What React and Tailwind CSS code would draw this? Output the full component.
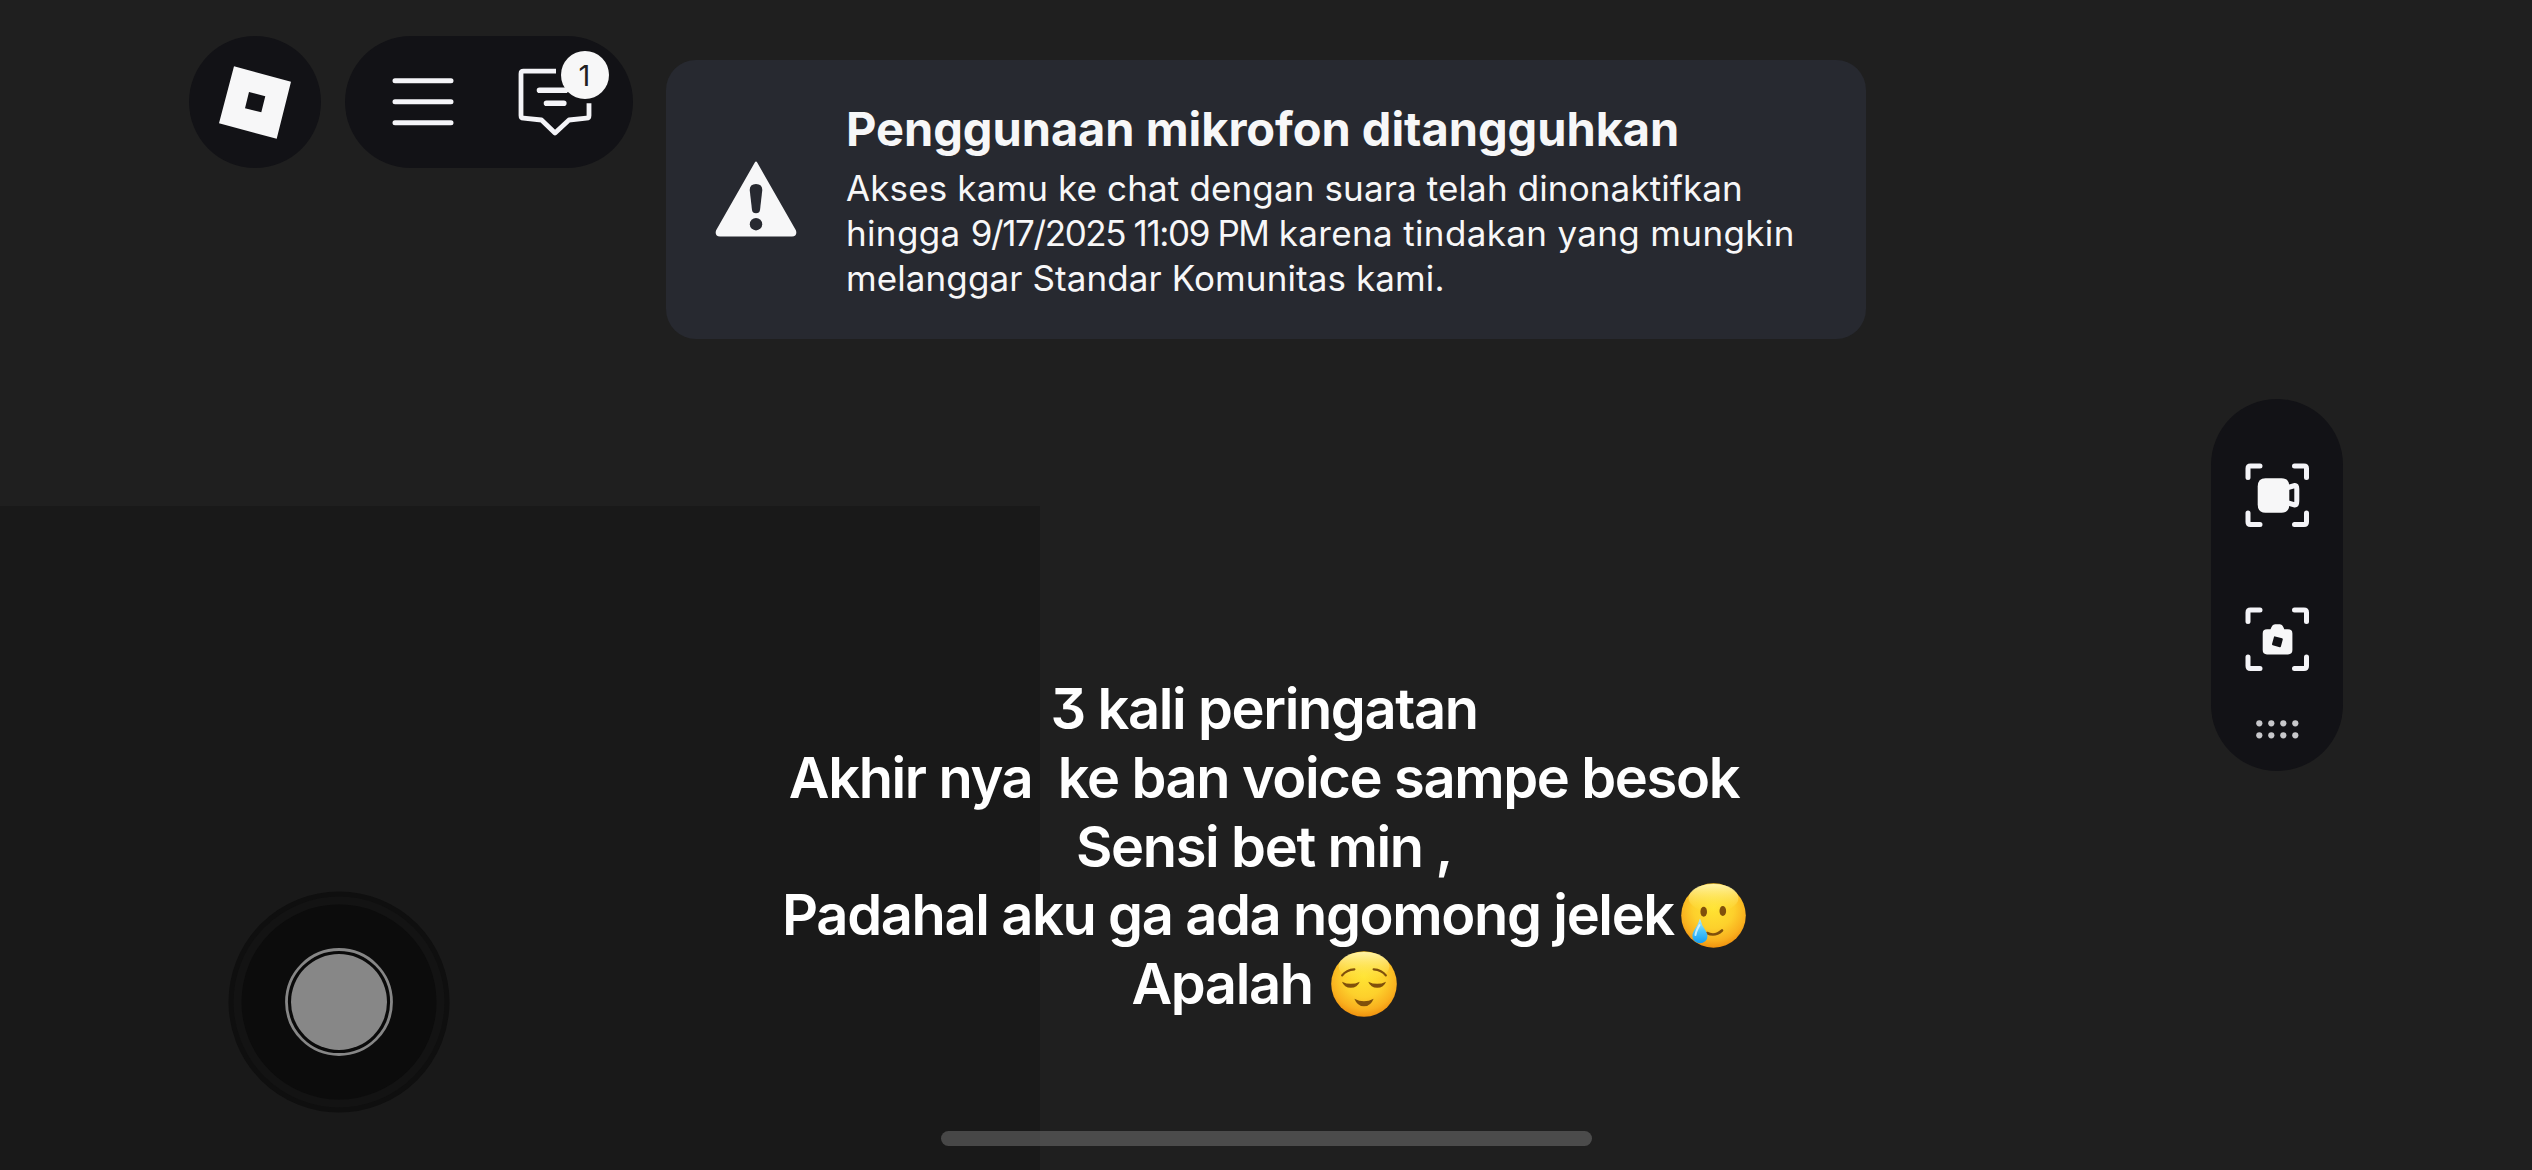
function RobloxButton() {
  return (
    <button className="size-[132px] shrink-0 rounded-full bg-[#121216]">
      <svg viewBox="0 0 132 132" className="size-full">
        <path
          fill="#f7f7f8"
          fillRule="evenodd"
          d="M45 30.3 102 45.7 87.7 102.7 30 87.3ZM60 56 56 72.3 72.3 76.3 76.3 60.3Z"
        />
      </svg>
    </button>
  );
}

function MenuPill() {
  return (
    <div className="relative flex h-[132px] w-[288px] shrink-0 items-center rounded-full bg-[#121216]">
      <svg viewBox="0 0 144 132" className="h-full w-1/2" fill="none" stroke="#f4f4f8" strokeWidth="5" strokeLinecap="round">
        <path d="M50 44.7h56M50 65.7h56M50 86.7h56" />
      </svg>
      <svg viewBox="144 0 144 132" className="h-full w-1/2" fill="none" stroke="#f4f4f8" strokeWidth="4.8" strokeLinejoin="round">
        <path d="M211 35.2H178.500Q176 35.2 176 37.700V79.500Q176 82 178.500 82.200L196.500 84 210 97 224 84 241.500 82.200Q244 82 244 79.500V67.300" />
        <path d="M194.500 54.300h26M201.500 67.300h17.300" strokeWidth="5.600" strokeLinecap="round" />
      </svg>
      {/* unread count */}
      <span className="absolute left-[215.5px] top-[15px] flex size-[48px] items-center justify-center rounded-full bg-[#f7f7f8] text-[29px] leading-none text-[#202022]">
        1
      </span>
    </div>
  );
}

function VoiceNotice() {
  return (
    <div className="ml-[33px] mt-6 flex h-[279px] w-[1200px] shrink-0 items-center gap-[49px] rounded-[30px] bg-[#272930] pl-[49px] text-[#f7f7f8]">
      <svg viewBox="0 0 82 76" className="mt-[-1px] h-[76px] w-[82px] shrink-0">
        <path fill="#f7f7f8" d="M41 .5Q41.700 .5 42.200 1.600L81 69.500Q82.500 75.500 77 75.500H5Q-.5 75.500 1 69.500L39.800 1.600Q40.300 .5 41 .5Z" />
        <path fill="#272930" d="M34.700 29Q34.700 23 41 23T47.300 29L45 49Q44.500 52.300 41 52.300T37 49Z" />
        <circle cx="41" cy="63.200" r="6.200" fill="#272930" />
      </svg>
      <div className="whitespace-nowrap pt-[3px]">
        <h1 className="text-[47px] font-bold leading-[56px] tracking-[-0.05px]">Penggunaan mikrofon ditangguhkan</h1>
        <div className="mt-[9px] text-[35px] leading-[45px]">
          <p className="tracking-[0.13px]">Akses kamu ke chat dengan suara telah dinonaktifkan</p>
          <p className="tracking-[0.35px]">
            hingga <span className="tracking-[-1.4px]">9/17/2025 11:09 PM</span> karena tindakan yang mungkin
          </p>
          <p className="tracking-[0.1px]">melanggar Standar Komunitas kami.</p>
        </div>
      </div>
    </div>
  );
}

function CaptureBar() {
  return (
    <div className="h-[372px] w-[132px] rounded-full bg-[#121216]">
      <svg viewBox="0 0 132 372" className="size-full">
        <g fill="none" stroke="#f4f4f8" strokeWidth="5" strokeLinecap="round" strokeLinejoin="round">
          <path d="M37 78.500V69.500Q37 67 39.500 67H49M83.500 67H93Q95.500 67 95.500 69.500V78.500M95.500 114V123Q95.500 125.500 93 125.500H83.500M49 125.500H39.500Q37 125.500 37 123V114" />
          <path d="M37 222.500V213.500Q37 211 39.500 211H49M83.500 211H93Q95.500 211 95.500 213.500V222.500M95.500 258V267Q95.500 269.500 93 269.500H83.500M49 269.500H39.500Q37 269.500 37 267V258" />
          <path d="M77 88.500 84 86.500Q85.800 86.500 85.800 90V102Q85.800 106 84 106L77 104" />
        </g>
        <path fill="#f7f7f8" d="M54.500 79.300H70.500Q78.300 79.300 78.300 87.500V105.500Q78.300 113.700 70.500 113.700H54.500Q46.700 113.700 46.700 105.500V87.500Q46.700 79.300 54.500 79.300Z" />
        <path fill="#f7f7f8" d="M56 230.300H59.500L60.500 228Q61.500 225.300 64 225.300H69Q71.300 225.300 72.300 228L73.300 230.300H77Q81.400 230.300 81.400 234.500V251Q81.400 255.400 77 255.400H56Q51.700 255.400 51.700 251V234.500Q51.700 230.300 56 230.300Z" />
        <rect x="61.800" y="238.200" width="9.200" height="9.200" rx="1" fill="#121216" transform="rotate(15 66.400 242.800)" />
        {[324.3, 336.3].map(y => [48.3, 60.3, 72.3, 84.3].map(x => <circle key={`${x}-${y}`} cx={x} cy={y} r="3.100" fill="#c8c8cb" />))}
      </svg>
    </div>
  );
}

function Thumbstick() {
  return (
    <svg viewBox="0 0 224 224" className="size-[224px]">
      <circle cx="112" cy="112" r="108" fill="#131313" stroke="#0f0f0f" strokeWidth="5" />
      <circle cx="112" cy="112" r="97.500" fill="#0c0c0c" />
      <circle cx="112" cy="112" r="52.500" fill="#0a0a0a" stroke="#878787" strokeWidth="2.800" />
      <circle cx="112" cy="112" r="48" fill="#878787" />
    </svg>
  );
}

function EmojiGradients() {
  return (
    <defs>
      <radialGradient id="face" cx="0.5" cy="0.38" r="0.64">
        <stop offset="0" stopColor="#ffe433" />
        <stop offset="0.5" stopColor="#fdd02c" />
        <stop offset="0.8" stopColor="#f9b01e" />
        <stop offset="1" stopColor="#ee8c0c" />
      </radialGradient>
      <linearGradient id="shine" x1="0" y1="0" x2="0" y2="1">
        <stop offset="0" stopColor="#fff6b0" stopOpacity="0.95" />
        <stop offset="1" stopColor="#ffe94a" stopOpacity="0" />
      </linearGradient>
      <linearGradient id="tear" x1="0" y1="0" x2="0" y2="1">
        <stop offset="0" stopColor="#b9ecff" />
        <stop offset="0.5" stopColor="#4cc6fa" />
        <stop offset="1" stopColor="#169df0" />
      </linearGradient>
    </defs>
  );
}

function TearFace() {
  return (
    <svg viewBox="0 0 65 65" className="ml-[7px] size-[65px]" role="img" aria-label="🥲">
      <EmojiGradients />
      <circle cx="32.500" cy="32.500" r="32.300" fill="url(#face)" />
      <ellipse cx="32.500" cy="15" rx="25" ry="14" fill="url(#shine)" />
      <ellipse cx="22.700" cy="28.700" rx="3.300" ry="5" fill="#80500b" />
      <ellipse cx="41.800" cy="28" rx="3.300" ry="5" fill="#80500b" />
      <path d="M26 50Q34 54 41 47.500" fill="none" stroke="#80500b" strokeWidth="2.600" strokeLinecap="round" />
      <path d="M19 35.500Q20.500 42 24.500 47.500Q28.500 54 24.500 58Q19 62.500 13.500 58Q9.500 54 13 47.500Q17 42 19 35.500Z" fill="url(#tear)" />
      <path d="M18.500 42Q15 48 14.500 52" fill="none" stroke="#dff6ff" strokeWidth="2" strokeLinecap="round" opacity="0.8" />
    </svg>
  );
}

function RelievedFace() {
  return (
    <svg viewBox="0 0 65 65" className="ml-[18px] size-[66px]" role="img" aria-label="😌">
      <circle cx="32.500" cy="32.500" r="32.300" fill="url(#face)" />
      <ellipse cx="32.500" cy="15" rx="25" ry="14" fill="url(#shine)" />
      <g fill="none" stroke="#80500b" strokeWidth="2.200" strokeLinecap="round">
        <path d="M11 24Q15 18.500 23 18M42 18Q50 18.500 54 24" />
      </g>
      <path fill="#80500b" d="M10.800 30.200Q19.500 34.500 28.300 30.200Q26 36.200 19.500 36.200T10.800 30.200ZM36.700 30.200Q45.500 34.500 54.200 30.200Q52 36.200 45.500 36.200T36.700 30.200ZM23 47Q32.500 52 42 47Q39 54.500 32.500 54.500T23 47Z" />
    </svg>
  );
}

function Caption() {
  const row = 'flex h-[68.75px] items-center justify-center whitespace-pre';
  return (
    <div className="pr-[4px] pt-[675px] text-[56px] font-semibold leading-[68.75px] tracking-[-1.38px] text-white [font-feature-settings:'cv09']">
      <p className={row}>3 kali peringatan</p>
      <p className={row}>Akhir nya  ke ban voice sampe besok</p>
      <p className={row}>Sensi bet min ,</p>
      <p className={row}>Padahal aku ga ada ngomong jelek<TearFace /></p>
      <p className={row}>Apalah<RelievedFace /></p>
    </div>
  );
}

export default function App() {
  return (
    <div className="grid h-[1170px] w-[2532px] grid-cols-1 grid-rows-1 overflow-hidden bg-[#1f1f1f] font-['Inter',sans-serif]">
      {/* thumbstick touch zone */}
      <div className="col-start-1 row-start-1 flex h-[664px] w-[1040px] items-end self-end bg-[#191919] pb-14 pl-[227px]">
        <Thumbstick />
      </div>

      <header className="col-start-1 row-start-1 flex items-start self-start pl-[189px] pt-9">
        <RobloxButton />
        <div className="ml-6">
          <MenuPill />
        </div>
        <VoiceNotice />
      </header>

      <aside className="col-start-1 row-start-1 self-start justify-self-end pr-[189px] pt-[399px]">
        <CaptureBar />
      </aside>

      <div className="col-start-1 row-start-1 self-start">
        <Caption />
      </div>

      {/* home indicator */}
      <div className="col-start-1 row-start-1 mb-6 h-[15px] w-[651px] self-end justify-self-center rounded-full bg-white/20" />
    </div>
  );
}
